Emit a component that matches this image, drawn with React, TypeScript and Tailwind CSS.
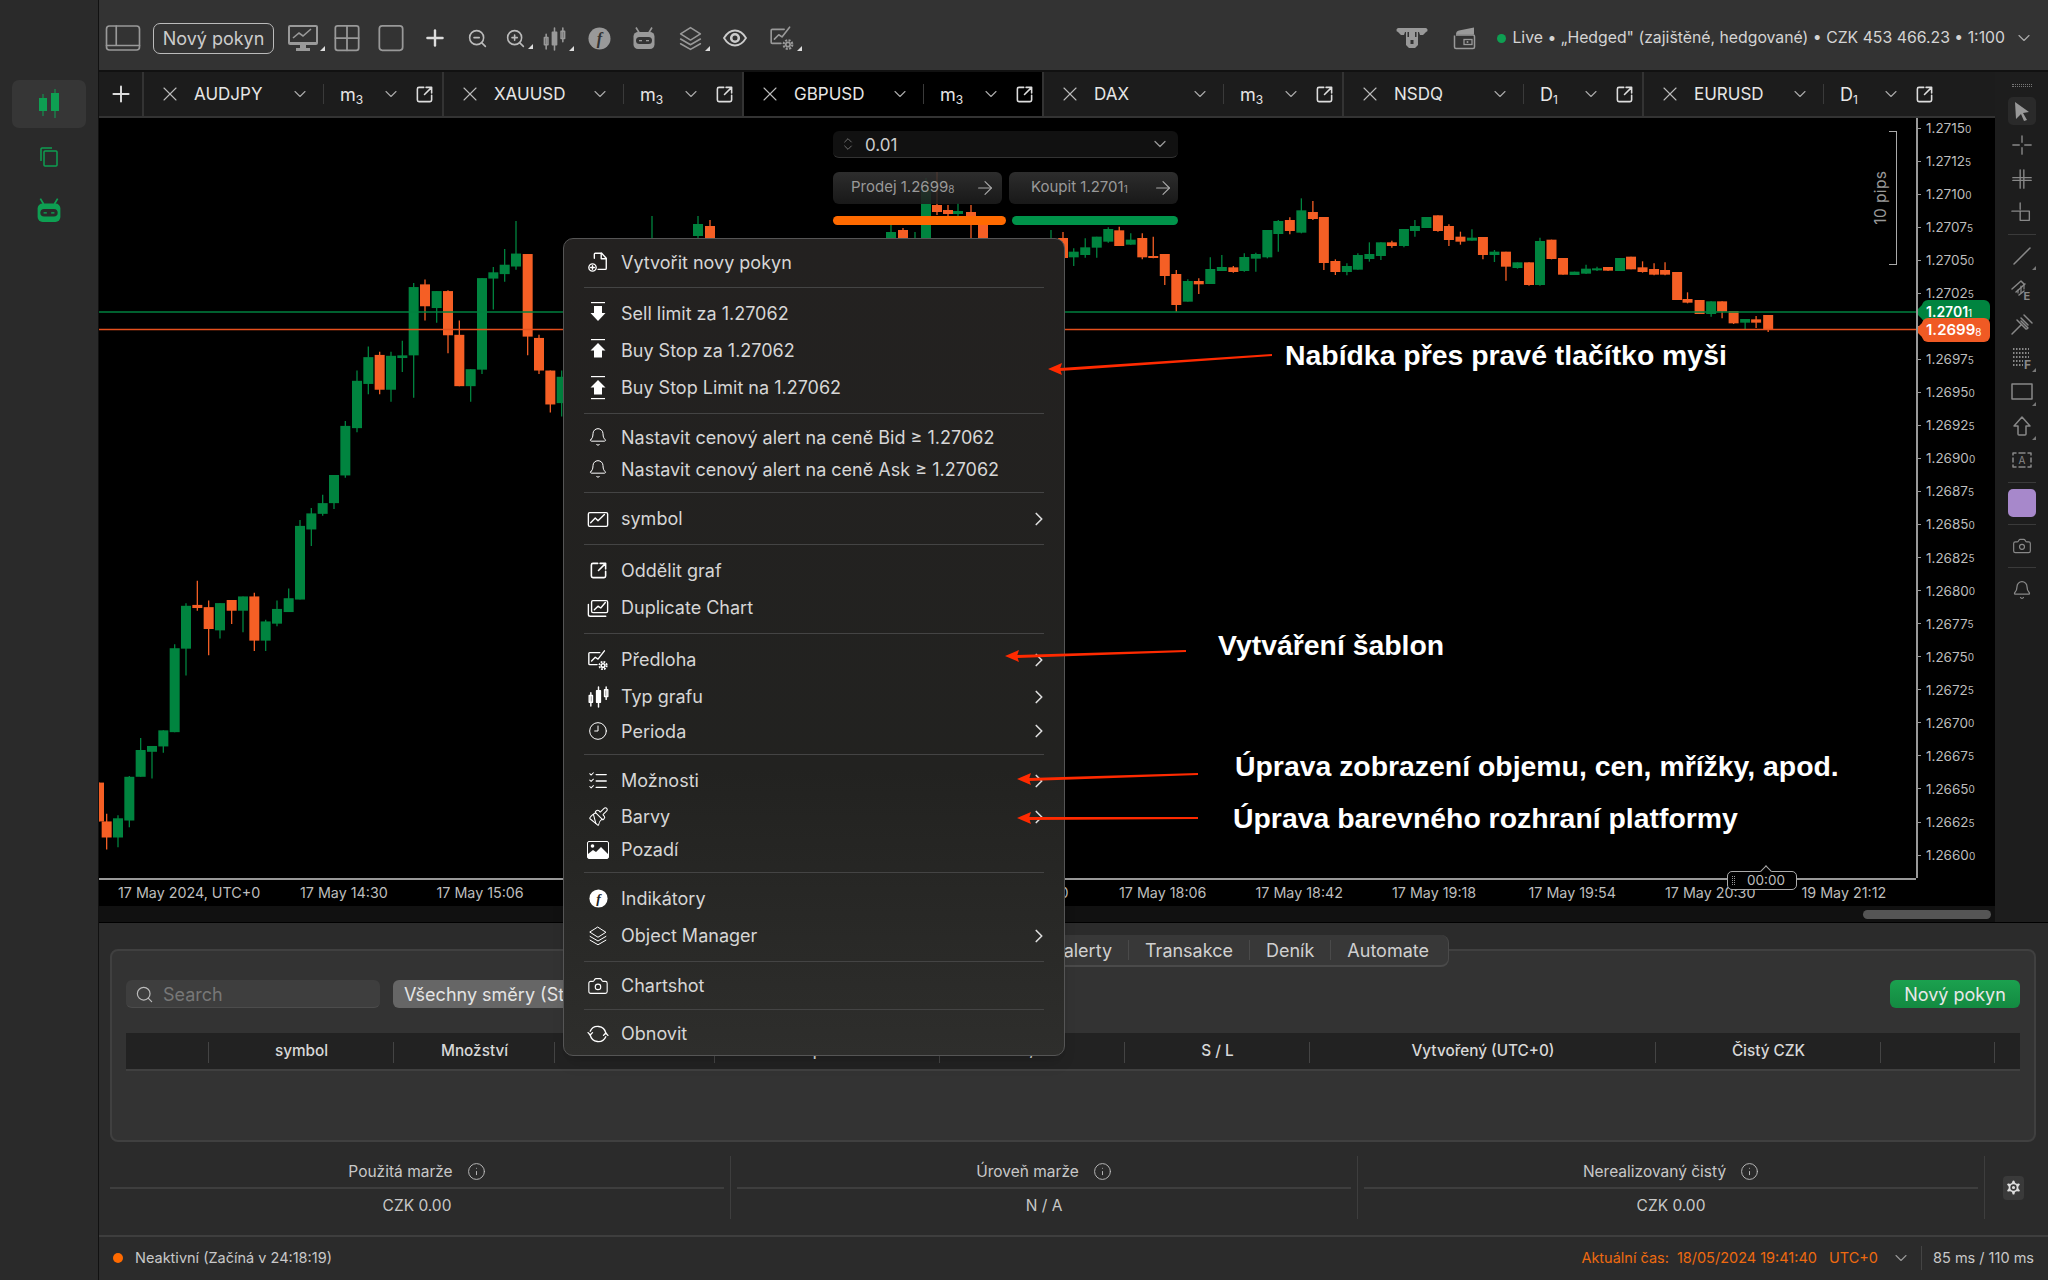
import React from 'react';
import { ArrowRight, Bell, Camera, ChevronDown, ChevronRight, ChevronsUpDown, Clock9, Info, Paintbrush, Plus, Search, Settings, X, ZoomIn, ZoomOut } from 'lucide-react';

const GREEN = '#00843f';
const ORANGE = '#f55f25';

type Candle = [number, number, number, number, number, 'G' | 'O'];

// left side of the chart, crop coords (x / 3 + 90, y / 2.24 + 200)
const leftCandles: Candle[] = [
    [27, 1305, 1305, 1392, 1392, 'O'], [50, 1375, 1392, 1428, 1455, 'O'], [84, 1378, 1385, 1428, 1450, 'G'],
    [118, 1290, 1292, 1390, 1405, 'G'], [152, 1205, 1232, 1292, 1292, 'G'], [186, 1223, 1223, 1236, 1296, 'G'],
    [220, 1188, 1188, 1224, 1238, 'G'], [254, 995, 1004, 1192, 1192, 'G'], [288, 903, 909, 1005, 1065, 'G'],
    [322, 853, 907, 914, 920, 'O'], [356, 897, 912, 961, 1020, 'O'], [390, 903, 903, 964, 982, 'G'],
    [425, 896, 896, 920, 950, 'O'], [459, 888, 888, 920, 968, 'G'], [493, 880, 888, 987, 1010, 'O'],
    [527, 940, 944, 987, 1010, 'G'], [561, 897, 916, 949, 955, 'G'], [596, 870, 892, 923, 923, 'G'],
    [630, 717, 730, 895, 895, 'G'], [664, 690, 702, 738, 775, 'G'], [698, 660, 679, 703, 707, 'G'],
    [732, 616, 616, 679, 692, 'G'], [766, 495, 506, 617, 622, 'G'], [801, 382, 405, 511, 520, 'G'],
    [835, 328, 352, 412, 435, 'G'], [869, 340, 347, 425, 435, 'O'], [903, 340, 349, 425, 452, 'G'],
    [937, 315, 348, 354, 385, 'G'], [971, 186, 195, 348, 443, 'G'], [1005, 178, 189, 238, 270, 'O'],
    [1040, 204, 204, 242, 275, 'G'], [1074, 202, 204, 303, 343, 'O'], [1108, 270, 302, 417, 417, 'O'],
    [1142, 379, 379, 417, 452, 'G'], [1176, 175, 175, 380, 390, 'G'], [1210, 150, 162, 176, 245, 'G'],
    [1244, 110, 145, 166, 183, 'G'], [1278, 47, 120, 149, 156, 'G'], [1313, 121, 121, 306, 348, 'O'],
    [1347, 302, 309, 382, 390, 'O'], [1381, 382, 382, 458, 476, 'O'], [1415, 382, 396, 455, 485, 'G'],
];

// right side, crop coords (x / 1.823 + 1060, y / 3 + 170)
const rightCandles: Candle[] = [
    [25, 235, 245, 262, 288, 'G'], [46, 205, 232, 255, 263, 'G'], [67, 200, 200, 233, 263, 'G'], [88, 172, 177, 215, 218, 'G'],
    [108, 170, 181, 228, 228, 'O'], [129, 190, 209, 224, 225, 'G'], [150, 190, 204, 262, 268, 'O'], [170, 200, 258, 262, 265, 'O'],
    [191, 252, 252, 318, 345, 'O'], [212, 300, 312, 405, 425, 'O'], [233, 328, 333, 395, 395, 'G'], [253, 325, 333, 343, 372, 'O'],
    [274, 262, 297, 342, 342, 'G'], [295, 255, 291, 303, 303, 'G'], [316, 288, 292, 306, 308, 'O'], [336, 250, 261, 303, 305, 'G'],
    [357, 248, 252, 266, 305, 'G'], [378, 180, 180, 262, 265, 'G'], [398, 150, 153, 192, 245, 'G'], [419, 142, 150, 183, 193, 'O'],
    [440, 85, 121, 188, 190, 'G'], [461, 93, 126, 147, 150, 'O'], [481, 141, 141, 279, 300, 'O'], [502, 268, 273, 306, 315, 'O'],
    [523, 280, 288, 306, 316, 'G'], [543, 250, 255, 299, 299, 'G'], [564, 217, 252, 267, 275, 'G'], [585, 217, 217, 258, 270, 'G'],
    [605, 212, 217, 228, 233, 'O'], [627, 177, 177, 228, 232, 'G'], [647, 150, 168, 183, 200, 'G'], [668, 141, 141, 174, 174, 'G'],
    [689, 136, 136, 183, 185, 'O'], [709, 163, 168, 210, 228, 'O'], [730, 185, 200, 215, 224, 'O'], [751, 178, 203, 212, 212, 'G'],
    [771, 201, 201, 255, 268, 'O'], [792, 240, 245, 255, 276, 'G'], [813, 245, 245, 290, 332, 'O'], [834, 277, 277, 294, 296, 'G'],
    [855, 277, 277, 345, 347, 'O'], [875, 203, 213, 345, 347, 'G'], [896, 209, 209, 267, 268, 'O'], [917, 264, 264, 314, 314, 'O'],
    [938, 305, 305, 315, 315, 'G'], [959, 284, 296, 311, 312, 'G'], [979, 290, 295, 297, 303, 'G'], [999, 291, 291, 302, 303, 'O'],
    [1021, 264, 264, 303, 303, 'G'], [1041, 260, 260, 298, 298, 'O'], [1062, 274, 292, 306, 308, 'O'], [1083, 280, 297, 314, 316, 'O'],
    [1103, 277, 300, 314, 316, 'O'], [1125, 306, 306, 390, 390, 'O'], [1144, 367, 387, 398, 400, 'O'], [1166, 390, 390, 432, 432, 'O'],
    [1187, 394, 394, 432, 440, 'G'], [1207, 394, 394, 425, 445, 'O'], [1228, 423, 423, 460, 462, 'O'], [1249, 447, 447, 458, 478, 'G'],
    [1269, 438, 448, 458, 474, 'O'], [1291, 435, 435, 480, 486, 'O'],
];

// the few that stick out above the menu, page coords
const midCandles: Candle[] = [
    [652, 216, 240, 260, 262, 'G'], [698, 216, 224, 236, 240, 'G'], [710, 220, 226, 245, 250, 'O'], [891, 225, 232, 245, 250, 'G'],
    [903, 228, 230, 245, 248, 'O'], [915, 232, 238, 240, 240, 'G'], [926, 178, 190, 260, 262, 'G'], [937, 172, 205, 212, 215, 'O'],
    [948, 205, 210, 214, 216, 'O'], [958, 203, 211, 214, 225, 'G'], [971, 205, 212, 225, 240, 'O'], [983, 222, 225, 245, 246, 'O'],
    [1051, 230, 240, 250, 252, 'G'], [1063, 232, 238, 258, 270, 'O'],
];

const toPage = (c: Candle, sx: number, ox: number, sy: number, oy: number): Candle =>
    [c[0] / sx + ox, c[1] / sy + oy, c[2] / sy + oy, c[3] / sy + oy, c[4] / sy + oy, c[5]];

const allCandles: Candle[] = [
    ...leftCandles.map(c => toPage(c, 3, 90, 2.24, 200)),
    ...midCandles,
    ...rightCandles.map(c => toPage(c, 1.823, 1060, 3, 170)),
];

const prices = Array.from({ length: 23 }, (_, i) => {
    const s = String(127150 - 25 * i);
    return [s[0] + '.' + s.slice(1, 5), s[5]];
});

const timeLabels = ['17 May 14:30', '17 May 15:06', '17 May 15:42', '17 May 16:18', '17 May 16:54', '17 May 17:30', '17 May 18:06', '17 May 18:42', '17 May 19:18', '17 May 19:54', '17 May 20:30', '19 May 21:12'];

const tabs = [
    ['AUDJPY', 'm', '3'], ['XAUUSD', 'm', '3'], ['GBPUSD', 'm', '3'], ['DAX', 'm', '3'], ['NSDQ', 'D', '1'], ['EURUSD', 'D', '1'],
];

/* ---------- small drawings ---------- */

const Svg: React.FC<{ s?: number; className?: string; children: React.ReactNode }> = ({ s = 24, className, children }) => (
    <svg width={s} height={s} viewBox="0 0 24 24" fill="none" stroke="currentColor" strokeWidth={1.5} strokeLinecap="round" strokeLinejoin="round" className={className}>
        {children}
    </svg>
);

const Popout = ({ s = 20 }: { s?: number }) => (
    <Svg s={s}><path d="M11 3H5a2 2 0 0 0-2 2v14a2 2 0 0 0 2 2h14a2 2 0 0 0 2-2v-6" strokeWidth={2} /><path d="M14 3h7v7M21 3l-9 9" strokeWidth={2} /></Svg>
);

const CandlesIcon = ({ s = 24 }: { s?: number }) => (
    <Svg s={s}>
        <path d="M4 8v14M12 2v21M20 2v13" />
        <rect x="2.300" y="11" width="3.400" height="7" />
        <rect x="10" y="6" width="4" height="12" fill="currentColor" />
        <rect x="18.300" y="5" width="3.400" height="7" />
    </Svg>
);

const Robot = ({ s = 24, eye = '#333' }: { s?: number; eye?: string }) => (
    <svg width={s} height={s} viewBox="0 0 24 24">
        <path d="M4 1.500l3 5M20 1.500l-3 5" stroke="currentColor" strokeWidth={1.600} />
        <rect x="1.500" y="6" width="21" height="17" rx="4.500" fill="currentColor" />
        <rect x="4" y="11" width="16" height="7" rx="3.500" fill={eye} />
        <rect x="7" y="14" width="3" height="1.300" fill="currentColor" />
        <rect x="14" y="14" width="3" height="1.300" fill="currentColor" />
    </svg>
);

const FCircle = ({ s = 24, bg = 'currentColor', fg = '#333' }: { s?: number; bg?: string; fg?: string }) => (
    <svg width={s} height={s} viewBox="0 0 24 24">
        <circle cx="12" cy="12" r="11.500" fill={bg} />
        <text x="12" y="18" textAnchor="middle" fontSize="17" fontWeight="700" fontStyle="italic" fontFamily="Liberation Serif, serif" fill={fg}>f</text>
    </svg>
);

const LayersIcon = ({ s = 24, w = 1.500 }: { s?: number; w?: number }) => (
    <Svg s={s}>
        <path d="M12 1.500l9.500 6-9.500 6-9.500-6z" strokeWidth={w} />
        <path d="M2.500 12.500l9.500 5.500 9.500-5.500M2.500 17l9.500 5.500 9.500-5.500" strokeWidth={w} />
    </Svg>
);

const EyeIcon = () => (
    <svg width="24" height="18" viewBox="0 0 24 18" fill="none" stroke="currentColor">
        <path d="M1 9c3-5 7-7.500 11-7.500S20 4 23 9c-3 5-7 7.500-11 7.500S4 14 1 9z" strokeWidth="1.800" />
        <circle cx="12" cy="9" r="3.800" strokeWidth="2.600" />
    </svg>
);

const ChartBox = ({ s = 22 }: { s?: number }) => (
    <Svg s={s}><rect x="1.500" y="5" width="21" height="15" rx="1.500" /><path d="M4 16l5-5 3 3 7-7" /></Svg>
);

const DupChart = ({ s = 22 }: { s?: number }) => (
    <Svg s={s}><path d="M1.500 8v11a2 2 0 0 0 2 2h17" /><rect x="5" y="4" width="17.500" height="13" rx="1.500" /><path d="M8 14l4-4 3 2 5-6" /></Svg>
);

const TemplateIcon = ({ s = 24 }: { s?: number }) => (
    <Svg s={s}>
        <path d="M14 4H3a1 1 0 0 0-1 1v11a1 1 0 0 0 1 1h8" />
        <path d="M5 13l4-4 3 2 7-9" />
        <circle cx="17.500" cy="18" r="2" strokeWidth={1.600} />
        <circle cx="17.500" cy="18" r="4" strokeDasharray="1.900 1.250" strokeLinecap="butt" strokeWidth={2} />
    </Svg>
);

const NewDoc = () => (
    <Svg s={22}>
        <path d="M8 8V3.500a1 1 0 0 1 1-1h7l5 5.500V19a1 1 0 0 1-1 1h-8" /><path d="M15.500 2.500v6h5.500" />
        <circle cx="6" cy="18" r="4" /><path d="M6 16v4M4 18h4" />
    </Svg>
);

const OrderArrow = ({ up, bottomBar }: { up?: boolean; bottomBar?: boolean }) => (
    <svg width="20" height="26" viewBox="0 0 20 26" fill="#fff">
        <rect x="3" y="1" width="14" height="1.200" />
        {up
            ? <path d="M10 5l7.500 7.500H14v7H6v-7H2.500z" />
            : <path d="M6 5h8v7h3.500L10 20 2.500 12H6z" />}
        {bottomBar && <rect x="3" y="23" width="14" height="1.200" />}
    </svg>
);

const OptionsIcon = () => (
    <Svg s={22}>
        <path d="M10 5h11M10 12h11M10 19h11" strokeWidth={1.400} />
        <path d="M3 4l1.500 1.500L7 3M3 11l1.500 1.500L7 10M3 18l1.500 1.500L7 17" strokeWidth={1.100} />
    </Svg>
);

const PictureIcon = () => (
    <svg width="22" height="18" viewBox="0 0 22 18">
        <rect x="0.500" y="0.500" width="21" height="17" rx="1.500" fill="#222" stroke="#fff" />
        <circle cx="5.500" cy="5" r="1.800" fill="#fff" />
        <path d="M1 17v-4l5-4 3 2 5-5 7 7v4z" fill="#fff" />
    </svg>
);

const RefreshIcon = () => (
    <Svg s={22}>
        <path d="M3.500 13A9 9 0 0 0 20.500 15M20.500 11A9 9 0 0 0 3.500 9" />
        <path d="M1.200 10.500l2.300 2.500 2.500-2.500M18 13.500l2.500-2.500 2.300 2.500" />
    </Svg>
);

const Caret = () => (
    <svg width="5" height="5" viewBox="0 0 5 5" className="absolute right-[-7px] bottom-0"><path d="M5 0v5H0z" fill="#ddd" /></svg>
);

/* ---------- top bar ---------- */

const TopCell: React.FC<{ w: string; caret?: boolean; children: React.ReactNode }> = ({ w, caret, children }) => (
    <div className={`${w} flex justify-center`}>
        <div className="relative flex items-center">
            {children}
            {caret && <Caret />}
        </div>
    </div>
);

const TopBar = () => (
    <div className="h-[72px] flex items-center bg-[#333333] border-b-2 border-[#111] pl-[6px] pt-[6px] text-[#999]">
        <TopCell w="w-[36px]">
            <Svg s={36}><rect x="1" y="4" width="22" height="16" rx="2" strokeWidth={1.100} /><path d="M7.500 4v13M1 17h22" strokeWidth={1.100} /></Svg>
        </TopCell>
        <button className="ml-[12px] w-[121px] h-[31px] rounded-[7px] border-[1.5px] border-[#bbb] text-[18px] text-[#ccc] flex items-center justify-center">Nový pokyn</button>
        <div className="w-[7px]" />
        <TopCell w="w-[44px]" caret>
            <svg width="30" height="26" viewBox="0 0 30 26">
                <rect x="0" y="0" width="30" height="20" rx="2" fill="#999" />
                <rect x="2" y="2" width="26" height="15" fill="#333" />
                <path d="M5 13l6-5 4 3 8-7" stroke="#999" strokeWidth="1.600" fill="none" />
                <path d="M12 20h6v3h4v3H8v-3h4z" fill="#999" />
            </svg>
        </TopCell>
        <TopCell w="w-[44px]">
            <Svg s={28}><rect x="2" y="1.500" width="20" height="21" rx="2" /><path d="M12 1.500v21M2 12h20" /></Svg>
        </TopCell>
        <TopCell w="w-[44px]">
            <Svg s={28}><rect x="2" y="1.500" width="20" height="21" rx="2.500" /></Svg>
        </TopCell>
        <TopCell w="w-[44px]"><Plus size={26} strokeWidth={2.200} className="text-[#ddd]" /></TopCell>
        <TopCell w="w-[40px]"><ZoomOut size={21} strokeWidth={1.800} className="text-[#bbb]" /></TopCell>
        <TopCell w="w-[37px]" caret><ZoomIn size={21} strokeWidth={1.800} className="text-[#bbb]" /></TopCell>
        <TopCell w="w-[40px]" caret><CandlesIcon s={25} /></TopCell>
        <TopCell w="w-[50px]"><FCircle s={23} /></TopCell>
        <TopCell w="w-[40px]"><Robot s={24} /></TopCell>
        <TopCell w="w-[52px]" caret><LayersIcon s={25} /></TopCell>
        <TopCell w="w-[38px]"><span className="text-[#ccc] flex"><EyeIcon /></span></TopCell>
        <TopCell w="w-[56px]" caret><TemplateIcon s={26} /></TopCell>

        <div className="ml-auto flex items-center text-[#ccc]">
            <svg width="32" height="22" viewBox="0 0 32 22" className="text-[#999] mr-[25px]">
                <path d="M3 1h26a2 2 0 0 1 1 4l-3 3h-3l-1-3h-1v13l-3 3h-6l-3-3V5H9L8 8H5L2 5a2 2 0 0 1 1-4z" fill="currentColor" />
                <path d="M11.500 5h1.500v5h-1.500zM19 5h1.500v5H19z" fill="#333" />
                <rect x="14.500" y="13" width="3" height="4" fill="#333" />
            </svg>
            <svg width="24" height="24" viewBox="0 0 24 24" fill="none" className="text-[#999] mr-[20px]">
                <path d="M3 9h17a1.500 1.500 0 0 1 1.500 1.500V21a1.500 1.500 0 0 1-1.500 1.500H3A1.500 1.500 0 0 1 1.500 21V9.500" stroke="currentColor" strokeWidth="1.500" />
                <path d="M3 8.500C3 6 4 5 6 4.500L21 1.500V8.500z" fill="currentColor" />
                <rect x="11" y="13.500" width="8" height="5" stroke="currentColor" strokeWidth="1.300" />
                <circle cx="14.500" cy="16" r="1" fill="currentColor" />
            </svg>
            <span className="w-[9px] h-[9px] rounded-full bg-[#0e9f52] mr-[6px]" />
            <span className="text-[15.800px] text-[#d4d4d4] whitespace-nowrap">Live • „Hedged" (zajištěné, hedgované) • CZK 453 466.23 • 1:100</span>
            <ChevronDown size={20} strokeWidth={1.400} className="ml-[9px] mr-[14px] text-[#aaa]" />
        </div>
    </div>
);

/* ---------- tabs ---------- */

const Tab: React.FC<{ name: string; tf: string; sub: string; active?: boolean; last?: boolean }> = ({ name, tf, sub, active, last }) => (
    <div className={`w-[300px] h-full flex items-center text-[#e6e6e6] ${last ? '' : 'border-r-2 border-[#333]'} ${active ? 'bg-black' : ''}`}>
        <X size={24} strokeWidth={1.100} className="ml-[14px] text-[#bbb]" />
        <span className="ml-[12px] pt-[2px] w-[96px] text-[17px]">{name}</span>
        <ChevronDown size={20} strokeWidth={1.300} className="text-[#aaa]" />
        <span className="ml-[13px] w-px h-[20px] bg-[#3a3a3a]" />
        <span className="ml-[16px] w-[41px] text-[18px]">{tf}<sub className="text-[12px]">{sub}</sub></span>
        <ChevronDown size={20} strokeWidth={1.300} className="text-[#aaa]" />
        <span className="ml-[14px] text-[#ddd]"><Popout s={19} /></span>
    </div>
);

const TabBar = () => (
    <div className="h-[46px] flex bg-[#1c1c1c] border-b-2 border-[#333]">
        <div className="w-[45px] h-full flex items-center justify-center border-r-2 border-[#333] text-[#ddd]">
            <Plus size={26} strokeWidth={1.800} />
        </div>
        {tabs.map(([n, t, s], i) => <Tab key={n} name={n} tf={t} sub={s} active={n === 'GBPUSD'} last={i === tabs.length - 1} />)}
    </div>
);

/* ---------- chart ---------- */

const CandleChart = () => (
    <svg width={1817} height={760} viewBox="99 118 1817 760" className="block">
        {allCandles.map((c, i) => {
            const col = c[5] === 'G' ? GREEN : ORANGE;
            return (
                <g key={i}>
                    <line x1={c[0]} x2={c[0]} y1={c[1]} y2={c[4]} stroke={col} strokeWidth={1.300} />
                    <rect x={c[0] - 5} y={c[2]} width={10} height={Math.max(c[3] - c[2], 2)} fill={col} />
                </g>
            );
        })}
        <line x1={99} x2={1916} y1={312} y2={312} stroke="#00803f" strokeWidth={1.500} />
        <line x1={99} x2={1916} y1={329.500} y2={329.500} stroke="#e5501e" strokeWidth={1.500} />
    </svg>
);

const TradePanel = () => (
    <div className="absolute left-[734px] top-[13px] w-[345px] text-[#999]">
        <div className="h-[27px] flex items-center rounded-[6px] bg-[#111] border-b border-[#333] pl-[7px] pr-[11px]">
            <ChevronsUpDown size={16} strokeWidth={1.200} className="text-[#888]" />
            <span className="ml-[9px] pt-[3px] text-[17px] text-[#ccc]">0.01</span>
            <ChevronDown size={20} strokeWidth={1.500} className="ml-auto -mr-[3px] text-[#999]" />
        </div>
        <div className="mt-[14px] flex gap-[7px]">
            <div className="w-[169px] h-[32px] flex items-center rounded-[6px] bg-linear-to-b from-[#333333e0] to-[#1c1c1ce0] pl-[18px] pb-[1px] text-[15px]">
                Prodej 1.2699<span className="text-[10px] mt-[3px]">8</span>
                <ArrowRight size={22} strokeWidth={1.200} className="ml-auto mr-[6px] text-[#aaa]" />
            </div>
            <div className="w-[169px] h-[32px] flex items-center rounded-[6px] bg-linear-to-b from-[#333333e0] to-[#1c1c1ce0] pl-[22px] pb-[1px] text-[15px]">
                Koupit 1.2701<span className="text-[10px] mt-[3px]">1</span>
                <ArrowRight size={22} strokeWidth={1.200} className="ml-auto mr-[4px] text-[#aaa]" />
            </div>
        </div>
        <div className="mt-[12px] flex gap-[6px]">
            <div className="w-[173px] h-[9px] rounded-full bg-[#ff6a00]" />
            <div className="w-[166px] h-[9px] rounded-full bg-[#00934a]" />
        </div>
    </div>
);

const PipsRuler = () => (
    <>
        <div className="absolute left-[1790px] top-[13px] w-[8px] h-[134px] border-y border-r border-[#aaa]" />
        <span className="absolute left-[1755px] top-[68px] -rotate-90 text-[15.500px] tracking-wide text-[#999] whitespace-nowrap">10 pips</span>
    </>
);

const PriceTag: React.FC<{ bg: string; top: string; h: string; price: string; last: string; big?: boolean }> = ({ bg, top, h, price, last, big }) => (
    <div className={`absolute -left-[2px] ${top} ${h} w-[74px] flex items-center`}>
        <span className={`w-[14px] h-[14px] rotate-45 ml-[2px] ${bg}`} />
        <div className={`absolute left-[6px] right-0 inset-y-0 rounded-[6px] flex items-center pl-[4px] text-white font-semibold ${bg} ${big ? 'text-[15px]' : 'text-[14px]'}`}>
            {price}<span className="text-[10px] font-normal mt-[4px]">{last}</span>
        </div>
    </div>
);

const PriceAxis = () => (
    <div className="relative w-[79px] h-[760px] bg-black border-l-2 border-[#999] overflow-hidden">
        <div className="flex flex-col -mt-[6.500px]">
            {prices.map(([p, d]) => (
                <div key={p + d} className="h-[33.050px] shrink-0 flex items-center text-[13.500px] text-[#bdbdbd]">
                    <span className="w-[3px] h-px bg-[#999] mr-[5px]" />
                    {p}<span className="text-[10px] mt-[2px]">{d}</span>
                </div>
            ))}
        </div>
        <PriceTag bg="bg-[#00843f]" top="top-[182px]" h="h-[23px]" price="1.2701" last="1" />
        <PriceTag bg="bg-[#f05a24]" top="top-[200px]" h="h-[24px]" price="1.2699" last="8" big />
    </div>
);

const TimeAxis = () => (
    <div className="h-[28px] flex items-center bg-black text-[14.300px] text-[#bdbdbd] whitespace-nowrap overflow-hidden">
        <div className="w-[1817px] shrink-0 h-full flex items-center pl-[19px] border-t-2 border-[#999] overflow-hidden">
            <span className="w-[182px] shrink-0">17 May 2024, UTC+0</span>
            {timeLabels.map(t => <span key={t} className="w-[136.500px] shrink-0">{t}</span>)}
        </div>
    </div>
);

const ScrollStrip = () => (
    <div className="h-[16px] bg-[#111] flex items-center justify-end pr-[4px]">
        <div className="w-[128px] h-[9px] rounded-full bg-[#555]" />
    </div>
);

/* ---------- right toolbar ---------- */

const ToolSep = () => <div className="w-[28px] h-px bg-[#3a3a3a]" />;

const Tool: React.FC<{ h?: string; caret?: boolean; children: React.ReactNode }> = ({ h = 'h-[34px]', caret, children }) => (
    <div className={`${h} relative w-[28px] flex items-center justify-center text-[#888]`}>
        {children}
        {caret && <svg width="4" height="4" viewBox="0 0 5 5" className="absolute right-0 bottom-[3px]"><path d="M5 0v5H0z" fill="#777" /></svg>}
    </div>
);

const RightToolbar = () => (
    <div className="w-[53px] h-[850px] bg-[#1d1d1d] flex flex-col items-center pt-[12px]">
        <div className="w-[20px] h-[3px] border-y border-dotted border-[#777]" />
        <div className="mt-[10px] mb-[3px] w-[28px] h-[28px] rounded-[5px] bg-[#2a2a2a] flex items-center justify-center text-[#999]">
            <svg width="16" height="20" viewBox="0 0 16 20"><path d="M1 1l14 10-6 1 4 7-3 1-3-7-5 5z" fill="currentColor" /></svg>
        </div>
        <Tool><Svg s={22}><path d="M12 2v7M12 15v7M2 12h7M15 12h7" /></Svg></Tool>
        <Tool><Svg s={22}><path d="M10 2v20M14 2v20M2 10.500h20M2 13.500h20" /></Svg></Tool>
        <Tool><Svg s={22}><path d="M10 1v7M1 10h9" /><rect x="10" y="10" width="10" height="10" /></Svg></Tool>
        <div className="mt-[4px] mb-[4px]"><ToolSep /></div>
        <Tool caret><Svg s={24}><path d="M4 20L20 4" /></Svg></Tool>
        <Tool>
            <Svg s={24}>
                <path d="M2 11l9-8 3 3M6 14l9-8M9 17l5-4" />
                <path d="M8 12v3M11 8v7M14 6v5" strokeWidth={1.200} />
                <text x="13.500" y="22" fontSize="11" fontWeight="700" fill="currentColor" stroke="none" fontFamily="Inter, sans-serif">E</text>
            </Svg>
        </Tool>
        <Tool>
            <Svg s={24}>
                <path d="M2 22l9.500-9.500" />
                <path d="M7 8l9 9a2 2 0 0 0 2-1l-7-7M11 6l7 7M14 3l8 8" />
            </Svg>
        </Tool>
        <Tool caret>
            <Svg s={24}>
                <path d="M3 3h16M3 7h16M3 11h16M3 15h10M3 19h10" strokeDasharray="1.500 1.500" strokeLinecap="butt" strokeWidth={2} />
                <text x="14" y="23" fontSize="12" fontWeight="700" fill="currentColor" stroke="none" fontFamily="Inter, sans-serif">F</text>
            </Svg>
        </Tool>
        <Tool caret><Svg s={24}><rect x="2" y="4" width="20" height="15" /></Svg></Tool>
        <Tool caret><Svg s={24}><path d="M12 3l8 9h-4v8a1 1 0 0 1-1 1H9a1 1 0 0 1-1-1v-8H4z" /></Svg></Tool>
        <Tool><Svg s={24}><path d="M3 7v-2h3M18 5h3v2M21 17v2h-3M6 19H3v-2M3 10v4M21 10v4M9 5h6M9 19h6" /><text x="12" y="16" textAnchor="middle" fontSize="10" fill="currentColor" stroke="none">A</text></Svg></Tool>
        <div className="mt-[5px]"><ToolSep /></div>
        <div className="mt-[6px] w-[28px] h-[28px] rounded-[5px] bg-[#a788cb]" />
        <div className="mt-[7px]"><ToolSep /></div>
        <Tool h="h-[42px]"><Camera size={20} strokeWidth={1.400} /></Tool>
        <ToolSep />
        <Tool h="h-[44px]"><Bell size={20} strokeWidth={1.500} /></Tool>
    </div>
);

/* ---------- bottom panel ---------- */

const headers = ['', 'symbol', 'Množství', 'Směr', 'Vstupní cena', 'T / P', 'S / L', 'Vytvořený (UTC+0)', 'Čistý CZK', '', ''];

const OrdersCard = () => (
    <div className="ml-[11px] mr-[12px] h-[193px] rounded-[8px] bg-[#333333] border-2 border-[#404040] px-[14px]">
        <div className="-mt-[16px] h-[32px] flex justify-end pr-[571px]">
            <div className="h-full w-[760px] flex items-center justify-end rounded-[8px] bg-[#383838] border-b-2 border-r border-[#4a4a4a] text-[18px] text-[#d0d0d0]">
                <span className="px-[16px]">alerty</span>
                <span className="w-px h-[20px] bg-[#4a4a4a]" />
                <span className="px-[16px]">Transakce</span>
                <span className="w-px h-[20px] bg-[#4a4a4a]" />
                <span className="px-[16px]">Deník</span>
                <span className="w-px h-[20px] bg-[#4a4a4a]" />
                <span className="pl-[16px] pr-[19px]">Automate</span>
            </div>
        </div>
        <div className="mt-[13px] h-[28px] flex items-center">
            <div className="w-[254px] h-full flex items-center rounded-[6px] bg-[#3e3e3e] border-b border-[#4c4c4c] pl-[9px] pt-[1px] text-[18px] text-[#777]">
                <Search size={19} strokeWidth={1.500} className="text-[#bbb]" />
                <span className="ml-[9px]">Search</span>
            </div>
            <div className="ml-[13px] w-[240px] h-full flex items-center rounded-[6px] bg-[#666] pl-[11px] text-[18px] text-[#e4e4e4] whitespace-nowrap overflow-hidden">Všechny směry (Stav)</div>
            <div className="ml-auto w-[130px] h-full flex items-center justify-center rounded-[6px] bg-linear-to-b from-[#1ba14f] to-[#138a41] pt-[1px] text-[18px] text-[#e8e8e8]">Nový pokyn</div>
        </div>
        <div className="mt-[25px] h-[38px] pt-[1px] grid grid-cols-[83px_185px_161px_160px_225px_185px_185px_346px_225px_114px_27px] bg-[#222] border-b-2 border-[#404040] text-[15.300px] font-medium text-[#d8d8d8]">
            {headers.map((h, i) => (
                <div key={i} className="relative flex items-center justify-center">
                    {h}
                    {i < 10 && <span className="absolute right-0 top-[8px] bottom-[6px] w-px bg-[#444]" />}
                </div>
            ))}
        </div>
    </div>
);

const Stat: React.FC<{ label: string; value: string }> = ({ label, value }) => (
    <div className="w-[614px] flex flex-col">
        <div className="h-[31px] flex items-center justify-center text-[15.500px] text-[#c8c8c8]">
            {label}
            <Info size={19} strokeWidth={1.200} className="ml-[14px] text-[#bbb]" />
        </div>
        <div className="h-[2px] bg-[#3e3e3e]" />
        <div className="flex-1 flex items-center justify-center pt-[3px] text-[15.500px] text-[#c8c8c8]">{value}</div>
    </div>
);

const VLine = () => <div className="mx-[6px] w-px h-full bg-[#3e3e3e]" />;

const StatsRow = () => (
    <div className="mt-[14px] ml-[11px] h-[63px] flex">
        <Stat label="Použitá marže" value="CZK 0.00" />
        <VLine />
        <Stat label="Úroveň marže" value="N / A" />
        <VLine />
        <Stat label="Nerealizovaný čistý" value="CZK 0.00" />
        <VLine />
        <div className="ml-[12px] self-center w-[21px] h-[24px] rounded-[4px] bg-[#3a3a3a] flex items-center justify-center text-[#ddd]">
            <Settings size={19} fill="currentColor" stroke="#3a3a3a" strokeWidth={2} />
        </div>
    </div>
);

const StatusBar = () => (
    <div className="mt-[16px] flex-1 flex items-center border-t-2 border-[#3e3e3e] text-[14.500px] pb-[2px]">
        <span className="ml-[14px] w-[10px] h-[10px] rounded-full bg-[#ff6a00]" />
        <span className="ml-[12px] text-[#c8c8c8]">Neaktivní (Začíná v 24:18:19)</span>
        <div className="ml-auto flex items-center text-[#ee6a10] whitespace-nowrap">
            <span>Aktuální čas:</span>
            <span className="ml-[8px]">18/05/2024 19:41:40</span>
            <span className="ml-[12px]">UTC+0</span>
            <ChevronDown size={20} strokeWidth={1.300} className="ml-[13px] text-[#999]" />
            <span className="ml-[10px] w-px h-[24px] bg-[#444]" />
            <span className="ml-[11px] mr-[14px] text-[#c8c8c8]">85 ms / 110 ms</span>
        </div>
    </div>
);

/* ---------- context menu ---------- */

const Sep = () => <div className="mx-[20px] my-[7px] h-px bg-[#444]" />;

const Item: React.FC<{ h: string; icon: React.ReactNode; label: string; arrow?: boolean }> = ({ h, icon, label, arrow }) => (
    <div className={`${h} flex items-center pl-[20px] pr-[14px]`}>
        <span className="w-[28px] flex justify-center text-white">{icon}</span>
        <span className="ml-[9px] text-[18px] text-[#d6d6d6]">{label}</span>
        {arrow && <ChevronRight size={22} strokeWidth={1.800} className="ml-auto text-[#ddd]" />}
    </div>
);

const ContextMenu = () => (
    <div className="absolute left-[563px] top-[238px] w-[502px] pt-[5px] rounded-[10px] border border-[#555] bg-linear-to-b from-[#232120] via-[#222220] via-65% to-[#2e2e2c] shadow-lg">
        <Item h="h-[36px]" icon={<NewDoc />} label="Vytvořit novy pokyn" />
        <Sep />
        <Item h="h-[37px]" icon={<OrderArrow />} label="Sell limit za 1.27062" />
        <Item h="h-[37px]" icon={<OrderArrow up />} label="Buy Stop za 1.27062" />
        <Item h="h-[37px]" icon={<OrderArrow up bottomBar />} label="Buy Stop Limit na 1.27062" />
        <Sep />
        <Item h="h-[32px]" icon={<Bell size={20} strokeWidth={1.200} />} label="Nastavit cenový alert na ceně Bid ≥ 1.27062" />
        <Item h="h-[32px]" icon={<Bell size={20} strokeWidth={1.200} />} label="Nastavit cenový alert na ceně Ask ≥ 1.27062" />
        <Sep />
        <Item h="h-[37px]" icon={<ChartBox />} label="symbol" arrow />
        <Sep />
        <Item h="h-[37px]" icon={<Popout s={19} />} label="Oddělit graf" />
        <Item h="h-[37px]" icon={<DupChart />} label="Duplicate Chart" />
        <Sep />
        <Item h="h-[37px]" icon={<TemplateIcon s={22} />} label="Předloha" arrow />
        <Item h="h-[37px]" icon={<CandlesIcon s={23} />} label="Typ grafu" arrow />
        <Item h="h-[32px]" icon={<Clock9 size={20} strokeWidth={1.200} />} label="Perioda" arrow />
        <Sep />
        <Item h="h-[37px]" icon={<OptionsIcon />} label="Možnosti" arrow />
        <Item h="h-[35px]" icon={<Paintbrush size={21} strokeWidth={1.200} className="-scale-x-100 rotate-90" />} label="Barvy" arrow />
        <Item h="h-[31px]" icon={<PictureIcon />} label="Pozadí" />
        <Sep />
        <Item h="h-[37px]" icon={<FCircle s={19} bg="#fff" fg="#222" />} label="Indikátory" />
        <Item h="h-[37px]" icon={<LayersIcon s={20} w={1.200} />} label="Object Manager" arrow />
        <Sep />
        <Item h="h-[33px]" icon={<Camera size={22} strokeWidth={1.200} />} label="Chartshot" />
        <Sep />
        <Item h="h-[33px]" icon={<RefreshIcon />} label="Obnovit" />
        <div className="h-[5px]" />
    </div>
);

/* ---------- annotations on top of the screenshot ---------- */

const notes = [
    { cls: 'left-[1285px] top-[338px]', text: 'Nabídka přes pravé tlačítko myši' },
    { cls: 'left-[1218px] top-[628px]', text: 'Vytváření šablon' },
    { cls: 'left-[1235px] top-[749px]', text: 'Úprava zobrazení objemu, cen, mřížky, apod.' },
    { cls: 'left-[1233px] top-[801px]', text: 'Úprava barevného rozhraní platformy' },
];

// tip x, tip y, tail x, tail y
const arrows = [[1048, 369, 1272, 355], [1005, 656, 1186, 651], [1017, 779, 1198, 774], [1017, 818, 1198, 818]];

const Annotations = () => (
    <>
        <svg width={2048} height={1280} className="absolute left-0 top-0 pointer-events-none">
            {arrows.map(([x1, y1, x2, y2]) => (
                <g key={y1} fill="#ff2a00">
                    <polygon points={`${x1 + 12},${y1 - 1} ${x2},${y2 - 1} ${x2},${y2 + 1} ${x1 + 12},${y1 + 2}`} />
                    <polygon points={`${x1},${y1} ${x1 + 14},${y1 - 6} ${x1 + 12},${y1} ${x1 + 14},${y1 + 6}`} />
                </g>
            ))}
        </svg>
        {notes.map(n => (
            <span key={n.text} className={`absolute ${n.cls} text-[28.400px] leading-[34px] font-bold text-white whitespace-nowrap font-['Liberation_Sans',sans-serif]`}>
                {n.text}
            </span>
        ))}
    </>
);

/* ---------- page ---------- */

const Sidebar = () => (
    <div className="w-[99px] h-full bg-[#2a2a2a] border-r border-[#111] flex flex-col items-center text-[#0e9f52]">
        <div className="mt-[80px] w-[74px] h-[48px] rounded-[7px] bg-[#363636] flex items-center justify-center">
            <svg width="22" height="30" viewBox="0 0 22 30" fill="currentColor">
                <rect x="1" y="9" width="8" height="13" /><rect x="4.500" y="5" width="1" height="22" />
                <rect x="13" y="4" width="8" height="18" /><rect x="16.500" y="0" width="1" height="29" />
            </svg>
        </div>
        <svg width="18" height="20" viewBox="0 0 18 20" fill="none" stroke="currentColor" strokeWidth="1.500" className="mt-[19px]">
            <rect x="4" y="4" width="13" height="15" rx="1" />
            <path d="M1 14V2a1 1 0 0 1 1-1h10" />
        </svg>
        <div className="mt-[30px]"><Robot s={26} eye="#2a2a2a" /></div>
    </div>
);

export default function App() {
    return (
        <div className="relative w-[2048px] h-[1280px] overflow-hidden flex bg-[#2b2b2b] font-[Inter,sans-serif]">
            <Sidebar />
            <div className="flex-1 flex flex-col min-w-0">
                <TopBar />
                <div className="flex">
                    <div className="w-[1896px] flex flex-col">
                        <TabBar />
                        <div className="h-[760px] flex bg-black">
                            <div className="relative w-[1817px]">
                                <CandleChart />
                                <TradePanel />
                                <PipsRuler />
                            </div>
                            <PriceAxis />
                        </div>
                        <TimeAxis />
                        <ScrollStrip />
                    </div>
                    <RightToolbar />
                </div>
                <div className="flex-1 flex flex-col bg-[#2b2b2b] border-t border-black pt-[26px]">
                    <OrdersCard />
                    <StatsRow />
                    <StatusBar />
                </div>
            </div>
            <div className="absolute left-[1727px] top-[871px] w-[70px] h-[19px] flex items-center justify-center rounded-[5px] border border-[#aaa] bg-black text-[13.500px] text-[#bdbdbd]">
                <span className="absolute left-[4px] w-[3px] h-[9px] border-x border-dotted border-[#999]" />
                <span className="ml-[8px]">00:00</span>
                <span className="absolute left-[34px] -top-[5px] w-[8px] h-[8px] rotate-45 bg-black border-l border-t border-[#aaa]" />
            </div>
            <ContextMenu />
            <Annotations />
        </div>
    );
}
